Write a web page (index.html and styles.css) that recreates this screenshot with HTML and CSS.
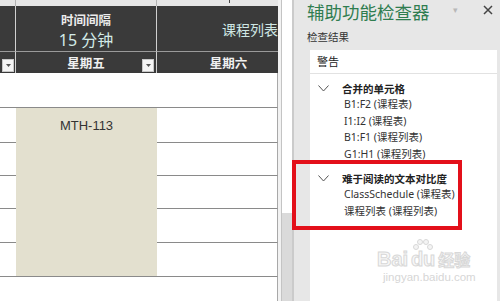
FILE: index.html
```html
<!DOCTYPE html>
<html lang="zh-CN">
<head>
<meta charset="utf-8">
<title>辅助功能检查器</title>
<link rel="stylesheet" href="styles.css">
</head>
<body>
<div class="app">
  <div class="sheet">
    <div class="colhead c0"></div>
    <div class="colhead c1"></div>
    <div class="colhead c2"><span class="tick"></span></div>

    <div class="hd1 c0"></div>
    <div class="hd1 c1 interval">
      <div class="int-label">时间间隔</div>
      <div class="int-value">15 分钟</div>
    </div>
    <div class="hd1 c2 sheet-title">课程列表</div>

    <div class="hd2 c0"><span class="filter"><svg width="5" height="3" viewBox="0 0 5 3"><path d="M0 0H5L2.5 3Z" fill="#555"/></svg></span></div>
    <div class="hd2 c1 day-cell"><span></span><span class="day">星期五</span><span class="filter"><svg width="5" height="3" viewBox="0 0 5 3"><path d="M0 0H5L2.5 3Z" fill="#555"/></svg></span></div>
    <div class="hd2 c2 day-sat">星期六</div>

    <div class="cell r4 c0"></div>
    <div class="cell r4 c1"></div>
    <div class="cell r4 c2 edge"></div>

    <div class="course">MTH-113</div>

    <div class="cell c0 r5"></div><div class="cell c2 r5 edge"></div>
    <div class="cell c0 r6"></div><div class="cell c2 r6 edge"></div>
    <div class="cell c0 r7"></div><div class="cell c2 r7 edge"></div>
    <div class="cell c0 r8"></div><div class="cell c2 r8 edge"></div>
    <div class="cell c0 r9"></div><div class="cell c2 r9 edge"></div>

    <div class="tail c0"></div>
    <div class="tail c1"></div>
    <div class="tail c2 edge"></div>
  </div>

  <div class="vscroll">
    <div class="s-gap"></div>
    <div class="s-track"><div class="s-thumb"></div></div>
    <div class="s-edge"></div>
  </div>

  <div class="panel">
    <div class="title-row">
      <div class="title">辅助功能检查器</div>
      <span class="caret">▾</span>
      <svg class="close" width="10" height="10" viewBox="0 0 10 10"><path d="M1 1L9 9M9 1L1 9" stroke="#444" stroke-width="1.5"/></svg>
    </div>
    <div class="subtitle">检查结果</div>
    <div class="results">
      <div class="res-head">警告</div>
      <div class="group">
        <div class="group-title">
          <svg class="chev" width="11" height="7" viewBox="0 0 11 7"><path d="M0.5 0.5L5.5 6L10.5 0.5" fill="none" stroke="#555" stroke-width="1"/></svg>
          <span>合并的单元格</span>
        </div>
        <div class="item">B1:F2 (课程表)</div>
        <div class="item">I1:I2 (课程表)</div>
        <div class="item">B1:F1 (课程列表)</div>
        <div class="item">G1:H1 (课程列表)</div>
      </div>
      <div class="group">
        <div class="group-title">
          <svg class="chev" width="11" height="7" viewBox="0 0 11 7"><path d="M0.5 0.5L5.5 6L10.5 0.5" fill="none" stroke="#555" stroke-width="1"/></svg>
          <span>难于阅读的文本对比度</span>
        </div>
        <div class="item">ClassSchedule (课程表)</div>
        <div class="item">课程列表 (课程列表)</div>
      </div>
      <div class="watermark">
        <div class="wm-logo">
          <span class="wm-bai">Bai</span>
          <span class="wm-du">
            <svg class="paw" width="26" height="14" viewBox="0 0 26 14"><g fill="#f4f4f4" stroke="#d8d8d8" stroke-width="1"><circle cx="6" cy="9" r="2.5"/><circle cx="10" cy="4" r="2.5"/><circle cx="16" cy="4" r="2.5"/><circle cx="20" cy="9" r="2.5"/></g></svg>
            du
          </span>
          <span class="wm-jy">经验</span>
        </div>
        <div class="wm-url">jingyan.baidu.com</div>
      </div>
    </div>
  </div>

  <div class="highlight"></div>
</div>
</body>
</html>
```
FILE: styles.css
```css
* { box-sizing: border-box; }
html, body { margin: 0; padding: 0; }
body {
  width: 500px;
  height: 301px;
  overflow: hidden;
  background: #fff;
  font-family: "Noto Sans", "Noto Sans CJK SC", sans-serif;
}
.app {
  position: relative;
  display: flex;
  width: 500px;
  height: 301px;
}

/* ---------- spreadsheet ---------- */
.sheet {
  width: 278px;
  height: 301px;
  display: grid;
  grid-template-columns: 16px 141px 121px;
  grid-template-rows: 6px 46px 21px 35px 35px 33px 33px 34px 34px 1fr;
}
.c0 { grid-column: 1; }
.c1 { grid-column: 2; }
.c2 { grid-column: 3; }

.colhead {
  grid-row: 1;
  background: #e6e6e6;
  border-right: 1px solid #b4b4b4;
  position: relative;
}
.colhead.c2 { border-right: none; }
.tick {
  position: absolute;
  left: 72px;
  top: 0;
  width: 1px;
  height: 3px;
  background: #444;
}

.hd1 {
  grid-row: 2;
  background: #3a3a3a;
  border-bottom: 1px solid #9a9a9a;
}
.hd1.c0, .hd2.c0 { border-right: 1px solid #d0d0d0; }
.hd1.c1, .hd2.c1 { border-right: 1px solid #cfcfcf; }
.interval {
  display: flex;
  flex-direction: column;
  align-items: center;
  padding-top: 4px;
}
.int-label {
  color: #ececec;
  font-weight: bold;
  font-size: 12.5px;
  line-height: 19px;
  font-family: "Noto Sans CJK SC", sans-serif;
}
.int-value {
  color: #d3ebe8;
  font-size: 16px;
  line-height: 22px;
  font-family: "Noto Sans", "Noto Sans CJK SC", sans-serif;
}
.sheet-title {
  display: flex;
  align-items: center;
  justify-content: flex-end;
  color: #cfe7e4;
  font-size: 14px;
  font-family: "Noto Sans CJK SC", sans-serif;
  white-space: nowrap;
}

.hd2 {
  grid-row: 3;
  background: #3a3a3a;
  color: #f0f0f0;
  font-weight: bold;
  font-size: 12.5px;
  font-family: "Noto Sans CJK SC", sans-serif;
}
.hd2.c0 {
  display: flex;
  align-items: flex-end;
  padding: 0 0 1px 2px;
}
.day-cell {
  display: grid;
  grid-template-columns: 14px 1fr 14px;
  align-items: center;
}
.day-cell .day { text-align: center; }
.day-cell .filter { align-self: end; margin-bottom: 1px; }
.day-sat {
  display: flex;
  align-items: center;
  justify-content: center;
  padding-left: 22px;
}
.filter {
  width: 12px;
  height: 13px;
  background: #f5f5f5;
  border: 1px solid #c8c8c8;
  display: flex;
  align-items: center;
  justify-content: center;
}

.cell {
  background: #fff;
  border-bottom: 1px solid #8a8a8a;
}
.edge { border-right: 1px solid #a8a8a8; }
.r4 { grid-row: 4; }
.r5 { grid-row: 5; }
.r6 { grid-row: 6; }
.r7 { grid-row: 7; }
.r8 { grid-row: 8; }
.r9 { grid-row: 9; }
.tail { grid-row: 10; background: #fff; }

.course {
  grid-column: 2;
  grid-row: 5 / span 5;
  background: #e3e0cf;
  border-bottom: 1px solid #8a8a8a;
  text-align: center;
  padding-top: 10px;
  font-size: 13px;
  line-height: 16px;
  color: #333;
  font-family: "Liberation Sans", sans-serif;
}

/* ---------- scrollbar strip ---------- */
.vscroll {
  width: 16px;
  height: 301px;
  display: flex;
}
.s-gap { width: 3px; background: #f2f2f2; }
.s-track {
  width: 11px;
  border-left: 1px solid #c4c4c4;
  background: #dadada;
}
.s-thumb { height: 213px; background: #fff; }
.s-edge { width: 2px; background: #cbcbcb; }

/* ---------- accessibility panel ---------- */
.panel {
  flex: 1;
  height: 301px;
  background: #e7e7e7;
  padding: 0 3px 0 13px;
  display: flex;
  flex-direction: column;
}
.title-row {
  height: 24px;
  display: flex;
  align-items: center;
}
.title {
  flex: 1;
  color: #2f7d50;
  font-size: 17.5px;
  line-height: 24px;
  font-family: "Noto Sans CJK SC", sans-serif;
  white-space: nowrap;
}
.caret {
  color: #b8b8b8;
  font-size: 9px;
  margin-right: 25px;
  margin-top: -6px;
}
.close { margin-right: 4px; margin-top: -5px; }
.subtitle {
  margin-top: 6px;
  font-size: 10.5px;
  line-height: 14px;
  color: #333;
  font-family: "Noto Sans CJK SC", sans-serif;
}
.results {
  position: relative;
  flex: 1;
  margin-top: 6px;
  margin-left: 3px;
  background: #fff;
}
.res-head {
  height: 24px;
  line-height: 22px;
  padding-left: 7px;
  border-bottom: 1px solid #e2e2e2;
  font-size: 11px;
  color: #222;
  font-family: "Noto Sans CJK SC", sans-serif;
}
.group { padding-top: 6px; }
.group + .group { padding-top: 8px; }
.group-title {
  display: flex;
  align-items: center;
  height: 16px;
  padding-left: 8px;
  font-size: 10.5px;
  font-weight: bold;
  color: #222;
  font-family: "Noto Sans CJK SC", sans-serif;
}
.chev { margin-right: 13px; }
.item {
  padding-left: 34px;
  font-size: 10.5px;
  line-height: 16.5px;
  color: #333;
  white-space: nowrap;
  font-family: "Noto Sans", "Noto Sans CJK SC", sans-serif;
}

/* ---------- watermark ---------- */
.watermark {
  position: absolute;
  left: 67px;
  top: 188px;
  display: flex;
  flex-direction: column;
  align-items: flex-start;
}
.wm-logo {
  display: flex;
  align-items: flex-end;
  font-family: "Liberation Sans", sans-serif;
  font-weight: bold;
  font-size: 20px;
  color: #f7f7f7;
  -webkit-text-stroke: 1px #d8d8d8;
  line-height: 22px;
}
.wm-du {
  display: flex;
  flex-direction: column;
  align-items: center;
  margin-left: 2px;
}
.paw { margin-bottom: -4px; }
.wm-jy {
  font-family: "Noto Sans CJK SC", sans-serif;
  font-size: 16px;
  margin-left: 2px;
}
.wm-url {
  margin-left: 6px;
  margin-top: 0;
  font-family: "Liberation Sans", sans-serif;
  font-size: 11.5px;
  line-height: 14px;
  color: #d6d6d6;
}

/* ---------- annotation ---------- */
.highlight {
  position: absolute;
  left: 292px;
  top: 160px;
  width: 170px;
  height: 70px;
  border: 4px solid #e3101a;
}
```
